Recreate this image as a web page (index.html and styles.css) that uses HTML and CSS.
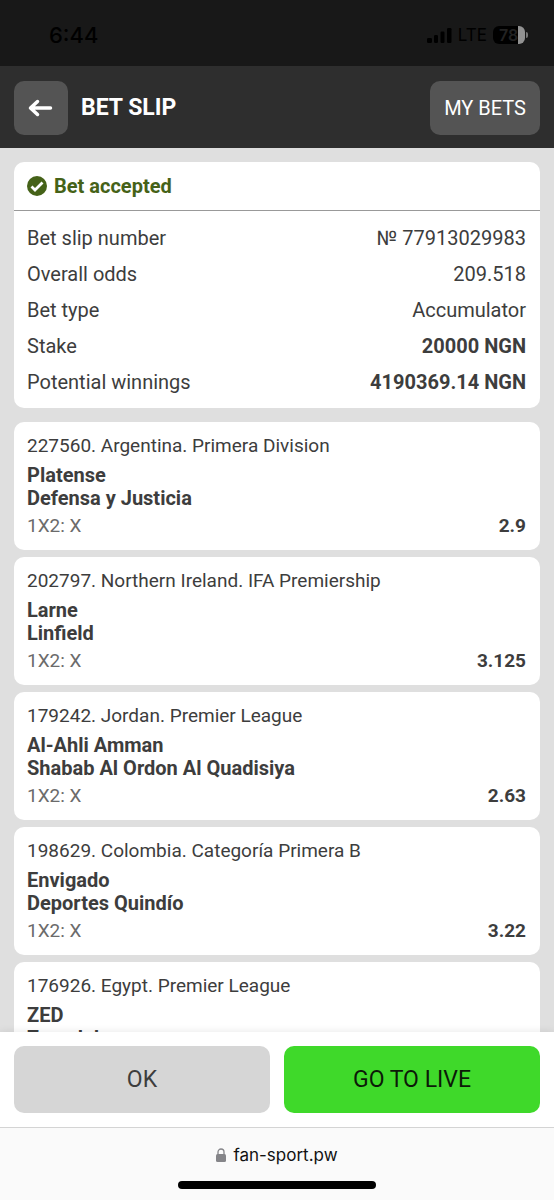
FILE: index.html
```
<!DOCTYPE html>
<html lang="en">
<head>
<meta charset="utf-8">
<meta name="viewport" content="width=device-width, initial-scale=1">
<title>Bet slip</title>
<link rel="stylesheet" href="styles.css">
</head>
<body>
<div class="app">
  <div class="status">
    <span class="clock">6:44</span>
    <div class="indicators">
      <svg class="signal" viewBox="0 0 25 17" aria-hidden="true"><rect x="0" y="11" width="5" height="5" rx="1.2"/><rect x="7" y="8" width="4" height="8" rx="1.2"/><rect x="13.500" y="4.500" width="4" height="11.500" rx="1.2"/><rect x="20" y="1" width="4.500" height="15" rx="1.2"/></svg>
      <span class="network">LTE</span>
      <span class="battery"><span class="level">78</span></span>
    </div>
  </div>
  <header class="header">
    <button class="tool back" type="button" aria-label="Back">
      <svg viewBox="0 0 26 20" aria-hidden="true"><path d="M9.500 3.500 2.500 10l7 6.500M3 10H22.500"/></svg>
    </button>
    <h1 class="title">BET SLIP</h1>
    <button class="tool my-bets" type="button">MY BETS</button>
  </header>
  <main class="content">
    <section class="card summary">
      <h2 class="accepted">
        <svg viewBox="0 0 20 20" aria-hidden="true"><circle cx="10" cy="10" r="10"/><path d="m4.500 10.500 3.500 3.500 7.500-7.500"/></svg>
        Bet accepted
      </h2>
      <dl class="details">
        <div class="row"><dt>Bet slip number</dt><dd>№ 77913029983</dd></div>
        <div class="row"><dt>Overall odds</dt><dd>209.518</dd></div>
        <div class="row"><dt>Bet type</dt><dd>Accumulator</dd></div>
        <div class="row"><dt>Stake</dt><dd class="strong">20000 NGN</dd></div>
        <div class="row"><dt>Potential winnings</dt><dd class="strong">4190369.14 NGN</dd></div>
      </dl>
    </section>
    <section class="matches">
      <article class="card match">
        <p class="league">227560. Argentina. Primera Division</p>
        <h3 class="teams">Platense<br>Defensa y Justicia</h3>
        <p class="pick"><span>1X2: X</span><b class="odds">2.9</b></p>
      </article>
      <article class="card match">
        <p class="league">202797. Northern Ireland. IFA Premiership</p>
        <h3 class="teams">Larne<br>Linfield</h3>
        <p class="pick"><span>1X2: X</span><b class="odds">3.125</b></p>
      </article>
      <article class="card match">
        <p class="league">179242. Jordan. Premier League</p>
        <h3 class="teams">Al-Ahli Amman<br>Shabab Al Ordon Al Quadisiya</h3>
        <p class="pick"><span>1X2: X</span><b class="odds">2.63</b></p>
      </article>
      <article class="card match">
        <p class="league">198629. Colombia. Categoría Primera B</p>
        <h3 class="teams">Envigado<br>Deportes Quindío</h3>
        <p class="pick"><span>1X2: X</span><b class="odds">3.22</b></p>
      </article>
      <article class="card match">
        <p class="league">176926. Egypt. Premier League</p>
        <h3 class="teams">ZED<br>Zamalek</h3>
      </article>
    </section>
  </main>
  <div class="actions">
    <button class="action ok" type="button">OK</button>
    <button class="action live" type="button">GO TO LIVE</button>
  </div>
  <footer class="browser">
    <div class="address">
      <svg viewBox="0 0 10 14" aria-hidden="true"><rect y="6" width="10" height="8" rx="1.500"/><path d="M2 6.500V4a3 3 0 0 1 6 0v2.500"/></svg>
      <span>fan-sport.pw</span>
    </div>
    <div class="home"></div>
  </footer>
</div>
</body>
</html>
```
FILE: styles.css
```
* { box-sizing: border-box; }
body, h1, h2, h3, p, dl, dd { margin: 0; }
body {
  font-family: Roboto, "Liberation Sans", sans-serif;
  font-size: 20px;
  color: #3d3d3d;
  background: #dfdfdf;
}
button { font: inherit; border: 0; padding: 0; cursor: pointer; }
.app { display: flex; flex-direction: column; height: 100vh; }

.status {
  display: flex;
  justify-content: space-between;
  align-items: center;
  padding: 21px 29px 17px 49px;
  background: #181818;
  color: #000;
  font-family: Inter, sans-serif;
}
.clock { font-size: 22px; line-height: 28px; font-weight: 500; }
.indicators { display: flex; align-items: center; }
.signal { width: 25px; height: 17px; margin-right: 6px; }
.network { font-size: 17px; line-height: 24px; margin-right: 6px; }
.battery {
  position: relative;
  width: 32px;
  height: 18px;
  border-radius: 6px;
  background: linear-gradient(90deg, #000 78%, #929292 78%);
}
.battery::after {
  content: "";
  position: absolute;
  left: 33px;
  top: 6px;
  width: 2px;
  height: 6px;
  border-radius: 0 2px 2px 0;
  background: #777;
}
.level {
  display: block;
  padding-left: 6px;
  font-size: 16px;
  line-height: 18px;
  font-weight: 600;
  color: #222;
}

.header {
  display: flex;
  align-items: center;
  gap: 13px;
  padding: 15px 14px 13px;
  background: #2e2e2e;
}
.tool {
  height: 54px;
  border-radius: 10px;
  background: #545454;
  color: #fff;
}
.back { display: grid; place-items: center; width: 54px; }
.back svg {
  width: 26px;
  height: 20px;
  fill: none;
  stroke: #fff;
  stroke-width: 3.5;
  stroke-linecap: round;
  stroke-linejoin: round;
}
.title { flex: 1; font-size: 23px; line-height: 28px; font-weight: 700; color: #fff; }
.my-bets { padding: 0 14px; }

.content {
  flex: 1;
  min-height: 0;
  overflow-y: auto;
  scrollbar-width: none;
  padding: 14px 14px 0;
}
.card { background: #fff; border-radius: 10px; }
.accepted {
  display: flex;
  align-items: center;
  gap: 7px;
  padding: 12px 13px;
  border-bottom: 1px solid #999;
  font-size: 20px;
  line-height: 24px;
  font-weight: 700;
  color: #456218;
}
.accepted svg { width: 20px; height: 20px; fill: #456218; }
.accepted path { fill: none; stroke: #fff; stroke-width: 2.8; }
.details { padding: 9px 14px 8px 13px; }
.row { display: flex; justify-content: space-between; line-height: 36px; }
.strong { font-weight: 700; }

.matches { display: grid; gap: 7px; margin-top: 14px; }
.match { padding: 11px 14px 12px 13px; }
.league { font-size: 19px; line-height: 25px; }
.teams { margin-top: 6px; font-size: 20px; line-height: 23px; font-weight: 700; }
.pick {
  display: flex;
  justify-content: space-between;
  margin-top: 4px;
  font-size: 19px;
  line-height: 24px;
  color: #6b6b6b;
}
.odds { color: #3d3d3d; }

.actions {
  position: relative;
  display: grid;
  grid-template-columns: 1fr 1fr;
  gap: 14px;
  padding: 14px;
  background: #fff;
  box-shadow: 0 0 8px rgba(0, 0, 0, .1);
}
.action { height: 67px; border-radius: 10px; font-size: 23px; }
.ok { background: #d6d6d6; color: #3d3d3d; }
.live { background: #3fd92a; color: #0c1a08; }

.browser {
  position: relative;
  display: flex;
  flex-direction: column;
  align-items: center;
  gap: 14px;
  padding: 15px 14px 11px;
  border-top: 1px solid #d4d4d4;
  background: #fafafa;
  color: #111;
}
.address {
  display: flex;
  align-items: center;
  gap: 7px;
  font-family: Inter, sans-serif;
  font-size: 17px;
  line-height: 24px;
}
.address svg { width: 10px; height: 14px; fill: #858589; }
.address path { fill: none; stroke: #858589; stroke-width: 1.3; }
.home { width: 198px; height: 8px; border-radius: 4px; background: #000; }
```
